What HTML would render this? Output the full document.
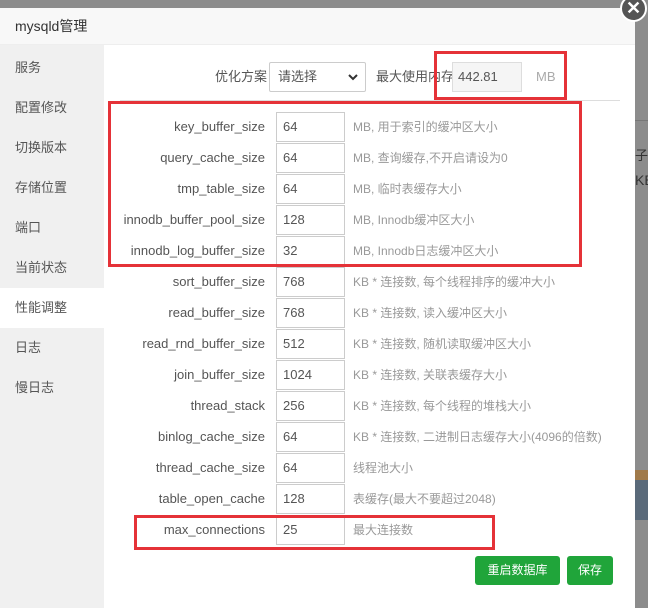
<!DOCTYPE html>
<html><head><meta charset="utf-8"><style>
*{box-sizing:border-box;margin:0;padding:0}
body{width:648px;height:601px;overflow:hidden;background:#8c8c8c;font-family:"Liberation Sans","Noto Sans CJK SC",sans-serif;position:relative;font-size:13px}
.dlg{position:absolute;left:0;top:8px;width:635px;height:600px;background:#fff}
.title{height:37px;background:#f8f8f8;border-bottom:1px solid #eee;font-size:14px;color:#333;line-height:37px;padding-left:15px}
.side{position:absolute;left:0;top:37px;width:104px;bottom:0;background:#f0f0f0;padding-top:3px}
.side div{height:40px;line-height:40px;padding-left:15px;color:#555;font-size:13px}
.side .on{background:#fff}
.abs{position:absolute}
.lab{position:absolute;right:383px;text-align:right;color:#555;font-size:13px;line-height:30px;height:30px}
.inp{position:absolute;left:276px;width:69px;height:30px;border:1px solid #ccc;padding-left:6px;line-height:28px;color:#555}
.desc{position:absolute;left:353px;color:#999;font-size:12px;line-height:30px}
.red{position:absolute;border:3px solid #e53238}
.btn{position:absolute;background:#20a53a;color:#fff;font-size:12px;border-radius:3px;text-align:center;line-height:29px;height:29px}
.close{position:absolute;left:620px;top:-5px;width:27px;height:27px;border-radius:50%;background:#555;border:2px solid #fff;color:#fff;text-align:center;line-height:22px;font-size:18px;font-weight:bold}
</style></head><body>
<div class="abs" style="left:635px;top:120px;width:13px;height:1px;background:#777"></div>
<div class="abs" style="left:635px;top:145px;color:#333;font-size:13px">子</div>
<div class="abs" style="left:635px;top:172px;color:#333;font-size:14px">KB</div>
<div class="abs" style="left:635px;top:470px;width:13px;height:20px;background:#a07a4a"></div>
<div class="abs" style="left:635px;top:480px;width:13px;height:40px;background:#5a6a7a"></div>
<div class="dlg">
<div class="title">mysqld管理</div>
<div class="side">
<div>服务</div><div>配置修改</div><div>切换版本</div><div>存储位置</div><div>端口</div><div>当前状态</div><div class="on">性能调整</div><div>日志</div><div>慢日志</div>
</div>
</div>
<div class="abs" style="left:215px;top:62px;color:#555;line-height:30px">优化方案</div>
<div class="abs" style="left:269px;top:62px;width:97px;height:30px;border:1px solid #ccc;border-radius:2px;padding-left:8px;line-height:28px;color:#555">请选择<svg style="position:absolute;right:7px;top:11px" width="10" height="7" viewBox="0 0 10 7"><path d="M1 1L5 5L9 1" fill="none" stroke="#333" stroke-width="2"/></svg></div>
<div class="abs" style="left:376px;top:62px;color:#555;line-height:30px">最大使用内存</div>
<div class="abs" style="left:452px;top:62px;width:70px;height:30px;border:1px solid #ddd;background:#f5f5f5;padding-left:5px;line-height:28px;color:#555">442.81</div>
<div class="abs" style="left:536px;top:62px;color:#aaa;line-height:30px">MB</div>
<div class="abs" style="left:120px;top:100px;width:500px;height:1px;background:#ddd"></div>
<div id="rows"></div>
<div class="red" style="left:108px;top:101px;width:474px;height:166px"></div>
<div class="red" style="left:434px;top:51px;width:133px;height:49px"></div>
<div class="red" style="left:134px;top:515px;width:361px;height:35px"></div>
<div class="btn" style="left:475px;top:556px;width:85px">重启数据库</div>
<div class="btn" style="left:567px;top:556px;width:46px">保存</div>
<div class="close">✕</div>
<script>
var d=[["key_buffer_size","64","MB, 用于索引的缓冲区大小"],["query_cache_size","64","MB, 查询缓存,不开启请设为0"],["tmp_table_size","64","MB, 临时表缓存大小"],["innodb_buffer_pool_size","128","MB, Innodb缓冲区大小"],["innodb_log_buffer_size","32","MB, Innodb日志缓冲区大小"],["sort_buffer_size","768","KB * 连接数, 每个线程排序的缓冲大小"],["read_buffer_size","768","KB * 连接数, 读入缓冲区大小"],["read_rnd_buffer_size","512","KB * 连接数, 随机读取缓冲区大小"],["join_buffer_size","1024","KB * 连接数, 关联表缓存大小"],["thread_stack","256","KB * 连接数, 每个线程的堆栈大小"],["binlog_cache_size","64","KB * 连接数, 二进制日志缓存大小(4096的倍数)"],["thread_cache_size","64","线程池大小"],["table_open_cache","128","表缓存(最大不要超过2048)"],["max_connections","25","最大连接数"]];
var h="";d.forEach(function(r,i){var y=112+i*31;h+='<div class="lab" style="top:'+y+'px">'+r[0]+'</div><div class="inp" style="top:'+y+'px">'+r[1]+'</div><div class="desc" style="top:'+y+'px">'+r[2]+'</div>';});
document.getElementById("rows").innerHTML=h;
</script>
</body></html>
